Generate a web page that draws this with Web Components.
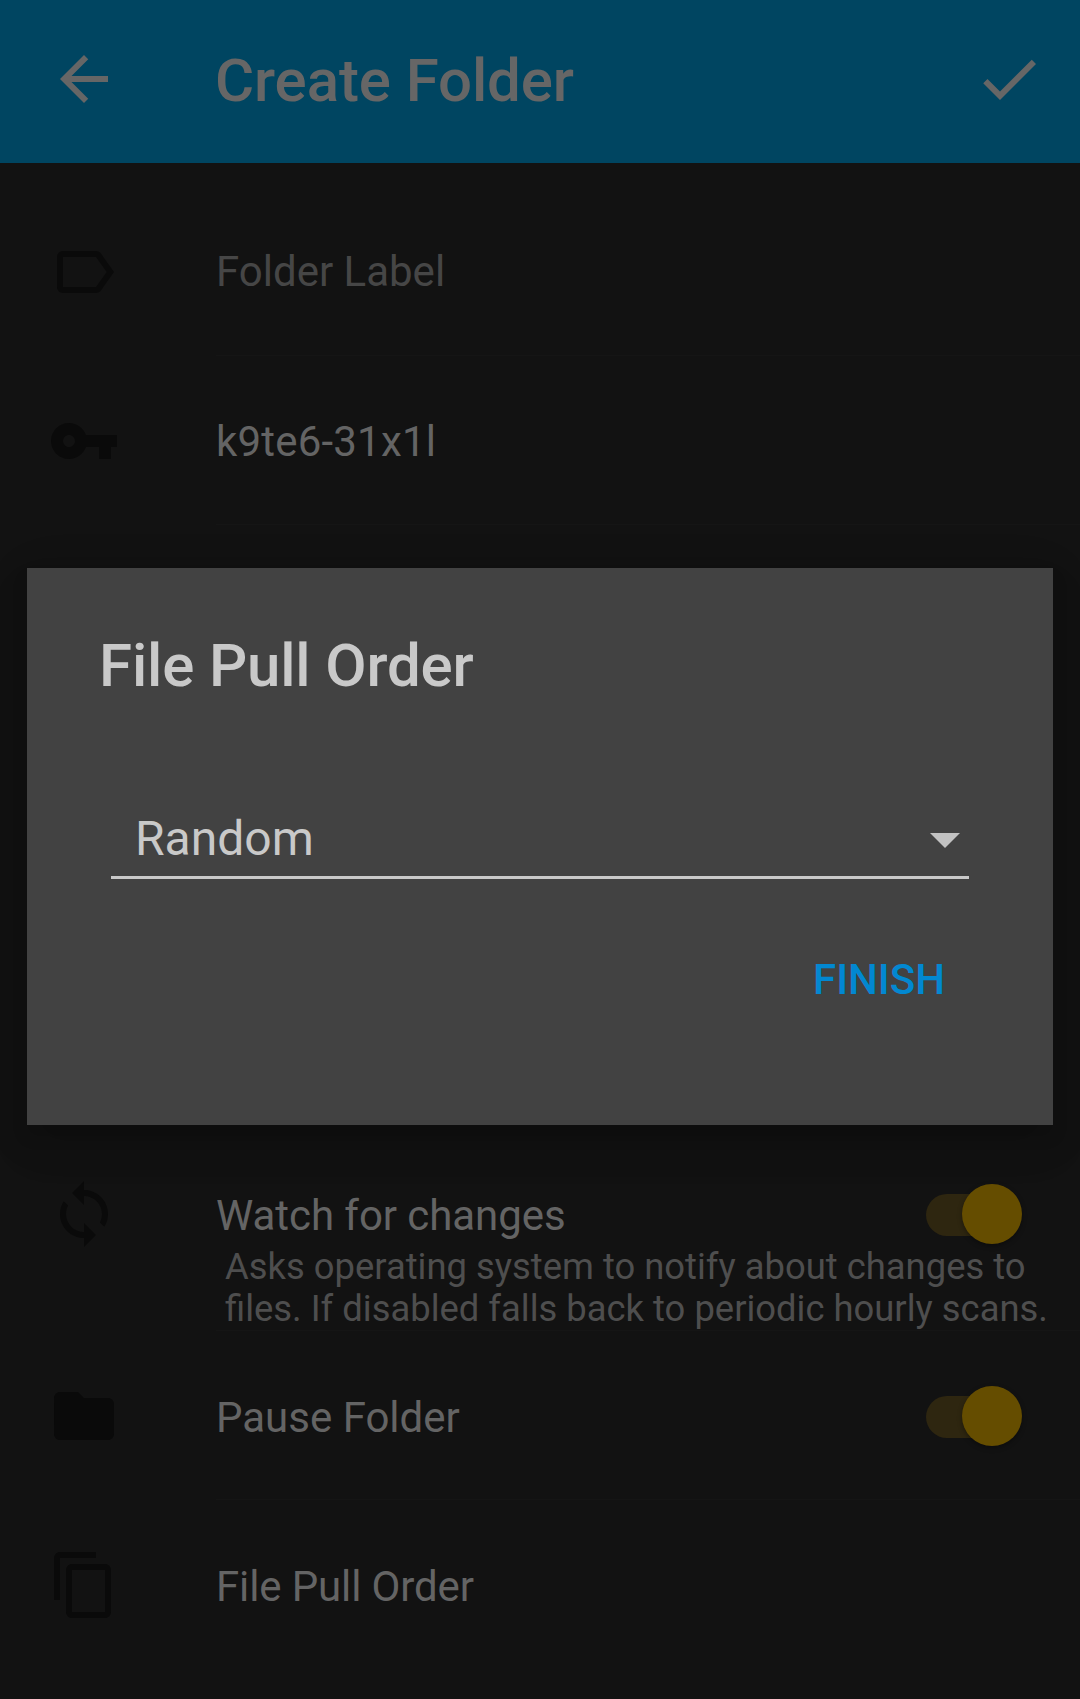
<!DOCTYPE html>
<html><head><meta charset="utf-8"><style>
html,body{margin:0;padding:0;background:#121212;font-family:Roboto,"Noto Sans",sans-serif}
</style></head><body>
<app-screen>
  <app-toolbar title="Create Folder"></app-toolbar>
  <setting-row icon="label" first dim style="--h:193px">Folder Label</setting-row>
  <setting-row icon="key" style="--h:169px;--ls:.2px">k9te6-31x1l</setting-row>
  <div style="height:605px"></div>
  <setting-row icon="sync" switch multi style="--h:201px;--ls:-.06px">Watch for changes<span slot="desc">Asks operating system to notify about changes to<br>files. If disabled falls back to periodic hourly scans.</span></setting-row>
  <setting-row icon="folder" switch style="--h:169px;--n:5px">Pause Folder</setting-row>
  <setting-row icon="copy" nodiv style="--h:169px;--n:5px;--ls:-.13px">File Pull Order</setting-row>
  <pull-dialog slot="overlay" heading="File Pull Order" value="Random" action="FINISH"></pull-dialog>
</app-screen>
<script>
const P={
back:"M20 11H7.83l5.59-5.59L12 4l-8 8 8 8 1.41-1.41L7.83 13H20v-2z",
check:"M9 16.17L4.83 12l-1.42 1.41L9 19 21 7l-1.41-1.41z",
label:"M17.63 5.84C17.27 5.33 16.67 5 16 5L5 5.01C3.9 5.01 3 5.9 3 7v10c0 1.1.9 1.99 2 1.99L16 19c.67 0 1.27-.33 1.63-.84L22 12l-4.37-6.16zM16 17H5V7h11l3.55 5L16 17z",
key:"M12.65 10C11.83 7.67 9.61 6 7 6c-3.31 0-6 2.69-6 6s2.69 6 6 6c2.61 0 4.83-1.67 5.65-4H17v4h4v-4h2v-4H12.65zM7 14c-1.1 0-2-.9-2-2s.9-2 2-2 2 .9 2 2-.9 2-2 2z",
sync:"M12 4V1L8 5l4 4V6c3.31 0 6 2.69 6 6 0 1.01-.25 1.97-.7 2.8l1.46 1.46C19.54 15.03 20 13.57 20 12c0-4.42-3.58-8-8-8zm0 14c-3.31 0-6-2.69-6-6 0-1.01.25-1.97.7-2.8L5.24 7.74C4.46 8.97 4 10.43 4 12c0 4.42 3.58 8 8 8v3l4-4-4-4v3z",
folder:"M10 4H4c-1.1 0-1.99.9-1.99 2L2 18c0 1.1.9 2 2 2h16c1.1 0 2-.9 2-2V8c0-1.1-.9-2-2-2h-8l-2-2z",
copy:"M16 1H4c-1.1 0-2 .9-2 2v14h2V3h12V1zm3 4H8c-1.1 0-2 .9-2 2v14c0 1.1.9 2 2 2h11c1.1 0 2-.9 2-2V7c0-1.1-.9-2-2-2zm0 16H8V7h11v14z"};
const svg=(n,c)=>`<svg width="72" height="72" viewBox="0 0 24 24" fill="${c}" style="display:block;flex:none"><path d="${P[n]}"/></svg>`;
class AppScreen extends HTMLElement{constructor(){super();this.attachShadow({mode:"open"}).innerHTML=`<style>
:host{display:flex;flex-direction:column;position:relative;width:1080px;height:1699px;overflow:hidden;background:#121212}
slot{display:block}
</style><slot></slot><slot name="overlay"></slot>`}}
class AppToolbar extends HTMLElement{connectedCallback(){const t=this.getAttribute("title");this.removeAttribute("title");this.attachShadow({mode:"open"}).innerHTML=`<style>
:host{display:flex;align-items:center;box-sizing:border-box;height:163px;flex:none;background:#004561;padding:0 35px 5px 48px}
.t{flex:1;margin-left:95px;font:500 60px/72px Roboto,sans-serif;letter-spacing:-.1px;color:#666;white-space:nowrap;position:relative;top:2px}
</style>${svg("back","#666")}<div class="t">${t}</div>${svg("check","#666")}`}}
class SettingRow extends HTMLElement{connectedCallback(){const n=this.getAttribute("icon"),sw=this.hasAttribute("switch");
this.attachShadow({mode:"open"}).innerHTML=`<style>
:host{display:flex;position:relative;box-sizing:border-box;height:var(--h);flex:none;padding-left:48px;align-items:center;--c:#646464}
:host([first]){padding-top:24px}
:host([dim]){--c:#464646}
:host([multi]){align-items:flex-start;padding-top:48px}
.body{flex:1;align-self:stretch;display:flex;align-items:center;margin-left:96px;border-bottom:1px solid #151515;min-width:0;padding-right:58px}
:host([first]) .body{margin-top:-24px;padding-top:22px}
:host([multi]) .body{margin-top:-48px;padding-top:53px;align-items:flex-start;padding-right:0}
:host([nodiv]) .body{border:0}
.txt{flex:1;min-width:0;padding-top:var(--n,3px)}
.main{font:400 42px/72px Roboto,sans-serif;letter-spacing:var(--ls,0);color:var(--c);white-space:nowrap}
:host([multi]) .main{line-height:60px}
.desc{font:400 36.4px/42px Roboto,sans-serif;letter-spacing:0;color:#4e4e4e;margin-left:9px;white-space:nowrap}
toggle-switch{flex:none;margin-top:2px}
:host([multi]) toggle-switch{position:absolute;right:58px;top:54px;margin:0}
</style>${svg(n,"#0a0a0a")}<div class="body"><div class="txt"><div class="main"><slot></slot></div>${this.hasAttribute("multi")?'<div class="desc"><slot name="desc"></slot></div>':''}</div>${sw?'<toggle-switch></toggle-switch>':''}</div>`}}
class ToggleSwitch extends HTMLElement{constructor(){super();this.attachShadow({mode:"open"}).innerHTML=`<style>
:host{display:block;position:relative;width:96px;height:60px}
.track{position:absolute;left:0;right:5px;top:10px;height:42px;border-radius:21px;background:#2e2610}
.thumb{position:absolute;right:0;top:0;width:60px;height:60px;border-radius:50%;background:#654d00;box-shadow:0 2px 5px rgba(0,0,0,.35)}
</style><div class="track"></div><div class="thumb"></div>`}}
class PullDialog extends HTMLElement{connectedCallback(){this.attachShadow({mode:"open"}).innerHTML=`<style>
:host{position:absolute;left:27px;top:568px;width:1026px;height:557px;box-sizing:border-box;background:#424242;display:flex;flex-direction:column;padding:62px 84px 0;box-shadow:0 24px 38px rgba(0,0,0,.1),0 9px 46px rgba(0,0,0,.1),0 11px 15px rgba(0,0,0,.12)}
h2{margin:0 0 0 -12px;font:500 60px/72px Roboto,sans-serif;letter-spacing:-.16px;color:#c9c9c9;white-space:nowrap}
.sp{margin-top:93px;height:84px;display:flex;align-items:center;border-bottom:3px solid #c9c9c9;padding:6px 9px 0 24px;box-sizing:border-box;font:400 48px/60px Roboto,sans-serif;color:#c9c9c9}
.sp span{flex:1}
.tri{width:0;height:0;margin-top:4px;border-left:15px solid transparent;border-right:15px solid transparent;border-top:15px solid #c2c2c2}
.act{align-self:flex-end;margin:71px 24px 0 0;font:500 42px/60px Roboto,sans-serif;color:#0288d1}
</style><h2>${this.getAttribute("heading")}</h2><div class="sp"><span>${this.getAttribute("value")}</span><i class="tri"></i></div><div class="act">${this.getAttribute("action")}</div>`}}
customElements.define("app-screen",AppScreen);
customElements.define("app-toolbar",AppToolbar);
customElements.define("toggle-switch",ToggleSwitch);
customElements.define("setting-row",SettingRow);
customElements.define("pull-dialog",PullDialog);
</script></body></html>
